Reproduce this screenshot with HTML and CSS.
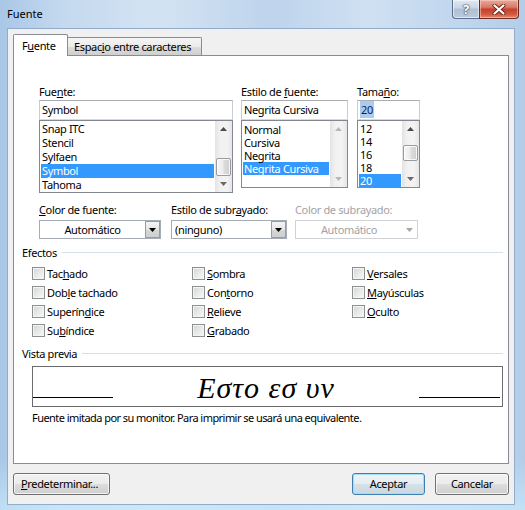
FILE: index.html
```html
<!DOCTYPE html>
<html lang="es">
<head>
<meta charset="utf-8">
<title>Fuente</title>
<link rel="stylesheet" href="styles.css">
</head>
<body>
<div class="window">
  <div class="titlebar">
    <div class="title">Fuente</div>
    <div class="caption">
      <div class="cap-btn help"><span>?</span></div>
      <div class="cap-btn close">
        <svg width="14" height="11" viewBox="0 0 14 11">
          <path d="M2.5 1.5 L11.5 9.5 M11.5 1.5 L2.5 9.5" stroke="#6b2216" stroke-width="4" stroke-linecap="round" fill="none"/>
          <path d="M2.5 1.5 L11.5 9.5 M11.5 1.5 L2.5 9.5" stroke="#ffffff" stroke-width="2.2" stroke-linecap="round" fill="none"/>
        </svg>
      </div>
    </div>
  </div>

  <div class="client">
    <div class="tabs">
      <div class="tab active">F<u>u</u>ente</div>
      <div class="tab">Espac<u>i</u>o entre caracteres</div>
    </div>

    <div class="panel">
      <div class="font-row">
        <div class="fcol col-name">
          <div class="lbl">Fue<u>n</u>te:</div>
          <div class="textbox">Symbol</div>
          <div class="listbox list-tall">
            <div class="items items-14">
              <div class="item">Snap ITC</div>
              <div class="item">Stencil</div>
              <div class="item">Sylfaen</div>
              <div class="item sel">Symbol</div>
              <div class="item">Tahoma</div>
            </div>
            <div class="vscroll">
              <div class="sb-btn"><svg width="7" height="4" viewBox="0 0 7 4"><path d="M0 4 L3.5 0 L7 4Z" fill="#4a4a4a"/></svg></div>
              <div class="sb-track"><div class="sb-thumb thumb-name"></div></div>
              <div class="sb-btn"><svg width="7" height="4" viewBox="0 0 7 4"><path d="M0 0 L3.5 4 L7 0Z" fill="#6a6a6a"/></svg></div>
            </div>
          </div>
        </div>

        <div class="fcol col-style">
          <div class="lbl">Estilo de <u>f</u>uente:</div>
          <div class="textbox">Negrita Cursiva</div>
          <div class="listbox list-short">
            <div class="items items-13 pad2">
              <div class="item">Normal</div>
              <div class="item">Cursiva</div>
              <div class="item">Negrita</div>
              <div class="item sel">Negrita Cursiva</div>
            </div>
            <div class="vscroll">
              <div class="sb-btn"><svg width="7" height="4" viewBox="0 0 7 4"><path d="M0 4 L3.5 0 L7 4Z" fill="#b8b8b8"/></svg></div>
              <div class="sb-track"></div>
              <div class="sb-btn"><svg width="7" height="4" viewBox="0 0 7 4"><path d="M0 0 L3.5 4 L7 0Z" fill="#b8b8b8"/></svg></div>
            </div>
          </div>
        </div>

        <div class="fcol col-size">
          <div class="lbl">Tama<u>ñ</u>o:</div>
          <div class="textbox"><span class="txtsel">20</span></div>
          <div class="listbox list-short">
            <div class="items items-13">
              <div class="item">12</div>
              <div class="item">14</div>
              <div class="item">16</div>
              <div class="item">18</div>
              <div class="item sel">20</div>
            </div>
            <div class="vscroll">
              <div class="sb-btn"><svg width="7" height="4" viewBox="0 0 7 4"><path d="M0 4 L3.5 0 L7 4Z" fill="#4a4a4a"/></svg></div>
              <div class="sb-track"><div class="sb-thumb thumb-size"></div></div>
              <div class="sb-btn"><svg width="7" height="4" viewBox="0 0 7 4"><path d="M0 0 L3.5 4 L7 0Z" fill="#6a6a6a"/></svg></div>
            </div>
          </div>
        </div>
      </div>

      <div class="combo-row">
        <div class="ccol c1">
          <div class="lbl"><u>C</u>olor de fuente:</div>
          <div class="combo">
            <div class="val center">Automático</div>
            <div class="dd"><svg width="7" height="4" viewBox="0 0 7 4"><path d="M0 0 L3.5 4 L7 0Z" fill="#000"/></svg></div>
          </div>
        </div>
        <div class="ccol c2">
          <div class="lbl">Estilo de subr<u>a</u>yado:</div>
          <div class="combo">
            <div class="val">(ninguno)</div>
            <div class="dd"><svg width="7" height="4" viewBox="0 0 7 4"><path d="M0 0 L3.5 4 L7 0Z" fill="#000"/></svg></div>
          </div>
        </div>
        <div class="ccol c3">
          <div class="lbl disabled">Color de subrayado:</div>
          <div class="combo combo-disabled">
            <div class="val center">Automático</div>
            <div class="dd dd-disabled"><svg width="7" height="4" viewBox="0 0 7 4"><path d="M0 0 L3.5 4 L7 0Z" fill="#a8a8a8"/></svg></div>
          </div>
        </div>
      </div>

      <div class="group-hdr">Efectos</div>
      <div class="checks">
        <div class="chk"><span class="box"></span>Tac<u>h</u>ado</div>
        <div class="chk"><span class="box"></span>Dob<u>l</u>e tachado</div>
        <div class="chk"><span class="box"></span>Superín<u>d</u>ice</div>
        <div class="chk"><span class="box"></span>Su<u>b</u>índice</div>
        <div class="chk"><span class="box"></span><u>S</u>ombra</div>
        <div class="chk"><span class="box"></span>Con<u>t</u>orno</div>
        <div class="chk"><span class="box"></span><u>R</u>elieve</div>
        <div class="chk"><span class="box"></span><u>G</u>rabado</div>
        <div class="chk"><span class="box"></span><u>V</u>ersales</div>
        <div class="chk"><span class="box"></span><u>M</u>ayúsculas</div>
        <div class="chk"><span class="box"></span><u>O</u>culto</div>
      </div>

      <div class="group-hdr hdr-preview">Vista previa</div>
      <div class="preview">
        <div class="pline"></div>
        <div class="ptext">Εστο εσ υν</div>
        <div class="pline pline-r"></div>
      </div>
      <div class="note">Fuente imitada por su monitor. Para imprimir se usará una equivalente.</div>
    </div>

    <div class="buttons">
      <div class="btn btn-default-set"><u>P</u>redeterminar...</div>
      <div class="spacer"></div>
      <div class="btn btn-ok">Aceptar</div>
      <div class="btn btn-cancel">Cancelar</div>
    </div>
  </div>
</div>
</body>
</html>
```

FILE: styles.css
```css
* { box-sizing: border-box; }
html, body { margin: 0; padding: 0; }
body {
  width: 525px;
  height: 510px;
  overflow: hidden;
  font-family: "Noto Sans", "Liberation Sans", sans-serif;
  font-size: 11px;
  letter-spacing: -0.35px;
  color: #000;
  background: #bcd5ee;
}
u { text-decoration: underline; text-underline-offset: 1px; }

.window {
  width: 525px;
  height: 510px;
  display: flex;
  flex-direction: column;
  background:
    linear-gradient(to bottom, rgba(255,255,255,0) 0%, rgba(255,255,255,0) 90%, rgba(200,235,250,0.7) 100%),
    linear-gradient(to right, #a9c7e6 0%, #c4d9ef 12%, #d3e3f3 30%, #bed4ec 52%, #cfe0f2 70%, #c0d6ed 88%, #b3cde9 100%);
}

/* title bar */
.titlebar {
  height: 28px;
  display: flex;
  align-items: flex-start;
  flex: none;
}
.title {
  padding: 6px 0 0 7px;
  line-height: 15px;
  font-size: 11px;
  letter-spacing: 0;
}
.caption {
  margin-left: auto;
  margin-right: 6px;
  display: flex;
}
.cap-btn {
  height: 19px;
  display: flex;
  align-items: center;
  justify-content: center;
  border: 1px solid #5b6e8c;
  border-top: none;
}
.help {
  width: 27px;
  border-right: none;
  border-bottom-left-radius: 4px;
  background: linear-gradient(to bottom, #dfe8f2 0%, #c7d5e5 45%, #aebfd5 50%, #bccbdd 100%);
  box-shadow: inset 0 0 0 1px rgba(255,255,255,0.55);
}
.help span {
  color: #fff;
  font-weight: bold;
  font-size: 13px;
  line-height: 13px;
  letter-spacing: 0;
  text-shadow: 0 0 1px #3d4f6c, 0 0 1px #3d4f6c, 0 0 2px #3d4f6c;
}
.close {
  width: 40px;
  border-bottom-right-radius: 4px;
  border-color: #6b2a22;
  background: linear-gradient(to bottom, #e9a99b 0%, #d97a66 40%, #c4412a 52%, #d45a42 80%, #e58b6c 100%);
  box-shadow: inset 0 0 0 1px rgba(255,220,210,0.5);
}

/* client */
.client {
  flex: 1;
  margin: 0 10px 5px 7px;
  background: #f0f0f0;
  border: 1px solid #93accb;
  padding: 5px 5px 0 5px;
  display: flex;
  flex-direction: column;
}

/* tabs */
.tabs {
  height: 21px;
  display: flex;
  align-items: flex-end;
  flex: none;
}
.tab {
  border: 1px solid #898c95;
  border-bottom: none;
  padding-left: 5px;
  white-space: nowrap;
}
.tab.active {
  width: 55px;
  height: 22px;
  margin-bottom: -1px;
  position: relative;
  z-index: 1;
  background: #fff;
  padding-left: 8px;
  line-height: 21px;
  border-radius: 2px 2px 0 0;
}
.tab:not(.active) {
  width: 134px;
  height: 18px;
  line-height: 18px;
  background: linear-gradient(to bottom, #f5f5f5 0%, #ebebeb 50%, #dddddd 51%, #cfcfcf 100%);
  padding-left: 6px;
  border-left: none;
  border-radius: 0 2px 0 0;
}

/* panel */
.panel {
  height: 409px;
  flex: none;
  background: #fff;
  border: 1px solid #898c95;
  display: flex;
  flex-direction: column;
}

.lbl {
  height: 15px;
  line-height: 15px;
  white-space: nowrap;
}
.lbl.disabled { color: #a3a3a3; }

.font-row {
  display: flex;
  align-items: flex-start;
  padding: 28px 0 0 25px;
}
.fcol { display: flex; flex-direction: column; }
.fcol .lbl { margin-bottom: 1px; }
.col-name { width: 194px; margin-right: 8px; }
.col-style { width: 107px; margin-right: 9px; }
.col-size { width: 63px; }

.textbox {
  height: 20px;
  border: 1px solid #abadb3;
  border-left-color: #c9ccd3;
  border-right-color: #c9ccd3;
  border-bottom-color: #d6d9de;
  padding-left: 2px;
  line-height: 18px;
  background: #fff;
  white-space: nowrap;
}
.txtsel {
  background: #a9cdf2;
  color: #10204a;
  padding: 1px 1px;
}

.listbox {
  display: flex;
  border: 1px solid #828790;
  background: #fff;
  overflow: hidden;
}
.list-tall { height: 73px; }
.list-short { height: 68px; }
.items { flex: 1; padding-top: 1px; overflow: hidden; }
.items.pad2 { padding-top: 2px; }
.item {
  margin: 0 1px;
  padding-left: 1px;
  white-space: nowrap;
}
.items-14 .item { height: 14px; line-height: 14px; }
.items-13 .item { height: 13px; line-height: 13px; }
.item.sel { background: #3399ff; color: #fff; }

/* scrollbars */
.vscroll {
  width: 17px;
  flex: none;
  display: flex;
  flex-direction: column;
  background: linear-gradient(to right, #e3e3e3 0%, #f1f1f1 30%, #f3f3f3 70%, #e6e6e6 100%);
}
.sb-btn {
  height: 16px;
  flex: none;
  display: flex;
  align-items: center;
  justify-content: center;
}
.sb-track { flex: 1; }
.sb-thumb {
  margin: 0 1px;
  border: 1px solid #9b9b9b;
  border-radius: 2px;
  background: linear-gradient(to right, #f7f7f7 0%, #ececec 45%, #dcdcdc 55%, #cfcfcf 100%);
  box-shadow: inset 0 0 0 1px rgba(255,255,255,0.8);
}
.thumb-name { margin-top: 21px; height: 18px; }
.thumb-size { margin-top: 8px; height: 16px; }

/* combos */
.combo-row {
  display: flex;
  padding-left: 25px;
  margin-top: 9px;
}
.ccol { display: flex; flex-direction: column; }
.ccol .lbl { margin-bottom: 3px; }
.c1 { width: 122px; margin-right: 10px; }
.c2 { width: 116px; margin-right: 8px; }
.c3 { width: 123px; }
.combo {
  height: 19px;
  border: 1px solid #a5acb5;
  background: #fff;
  display: flex;
}
.combo .val {
  flex: 1;
  line-height: 17px;
  padding-left: 3px;
  white-space: nowrap;
}
.combo .val.center { text-align: center; padding-left: 0; }
.dd {
  width: 15px;
  flex: none;
  border: 1px solid #9c9c9c;
  background: linear-gradient(to bottom, #f4f4f4 0%, #e6e6e6 50%, #d6d6d6 51%, #cfcfcf 100%);
  display: flex;
  align-items: center;
  justify-content: center;
}
.combo-disabled { border-color: #cfd2d6; }
.combo-disabled .val { color: #a3a3a3; }
.dd-disabled { background: none; border-color: transparent; }

/* groups */
.group-hdr {
  display: flex;
  align-items: center;
  height: 15px;
  line-height: 15px;
  margin-top: 6px;
  padding: 0 5px 0 8px;
  white-space: nowrap;
}
.group-hdr::after {
  content: "";
  flex: 1;
  height: 1px;
  background: #d5dfe5;
  margin-left: 5px;
}

.checks {
  display: grid;
  grid-template-columns: 160px 160px 160px;
  grid-template-rows: repeat(4, 19px);
  grid-auto-flow: column;
  padding-left: 18px;
  margin-top: 4px;
}
.chk {
  display: flex;
  align-items: center;
  white-space: nowrap;
}
.box {
  width: 13px;
  height: 13px;
  margin-right: 2px;
  flex: none;
  border: 1px solid #8e8f8f;
  background: linear-gradient(135deg, #d3d4d5 0%, #e7e8e8 50%, #f8f8f8 100%);
  box-shadow: inset 0 0 0 1px #f4f4f4;
}

.hdr-preview { margin-top: 6px; }
.preview {
  margin: 5px 0 0 18px;
  width: 471px;
  height: 41px;
  border: 1px solid #6b6b6b;
  display: flex;
  align-items: baseline;
  justify-content: space-between;
  padding: 3px 2px 0 0;
  overflow: hidden;
}
.pline {
  width: 80px;
  height: 1px;
  background: #000;
}
.pline-r { width: 81px; }
.ptext {
  font-family: "Liberation Serif", "DejaVu Serif", serif;
  font-style: italic;
  font-size: 30px;
  letter-spacing: 1px;
  line-height: 36px;
  white-space: nowrap;
}
.note {
  margin-top: 3px;
  padding-left: 18px;
  line-height: 15px;
  letter-spacing: -0.55px;
  white-space: nowrap;
}

/* buttons */
.buttons {
  display: flex;
  margin-top: 9px;
  flex: none;
}
.spacer { flex: 1; }
.btn {
  height: 22px;
  border: 1px solid #707070;
  border-radius: 3px;
  background: linear-gradient(to bottom, #f2f2f2 0%, #ebebeb 50%, #dddddd 51%, #cfcfcf 100%);
  box-shadow: inset 0 0 0 1px rgba(255,255,255,0.75);
  line-height: 20px;
  text-align: center;
  white-space: nowrap;
}
.btn-default-set { width: 97px; text-align: left; padding-left: 7px; }
.btn-ok {
  width: 73px;
  margin-right: 10px;
  border-color: #3c7fb1;
  background: linear-gradient(to bottom, #eef3f6 0%, #e4edf2 50%, #d4e1e8 51%, #c9d8e1 100%);
  box-shadow: inset 0 0 0 1px #a7dcf6;
}
.btn-cancel { width: 74px; }
```
